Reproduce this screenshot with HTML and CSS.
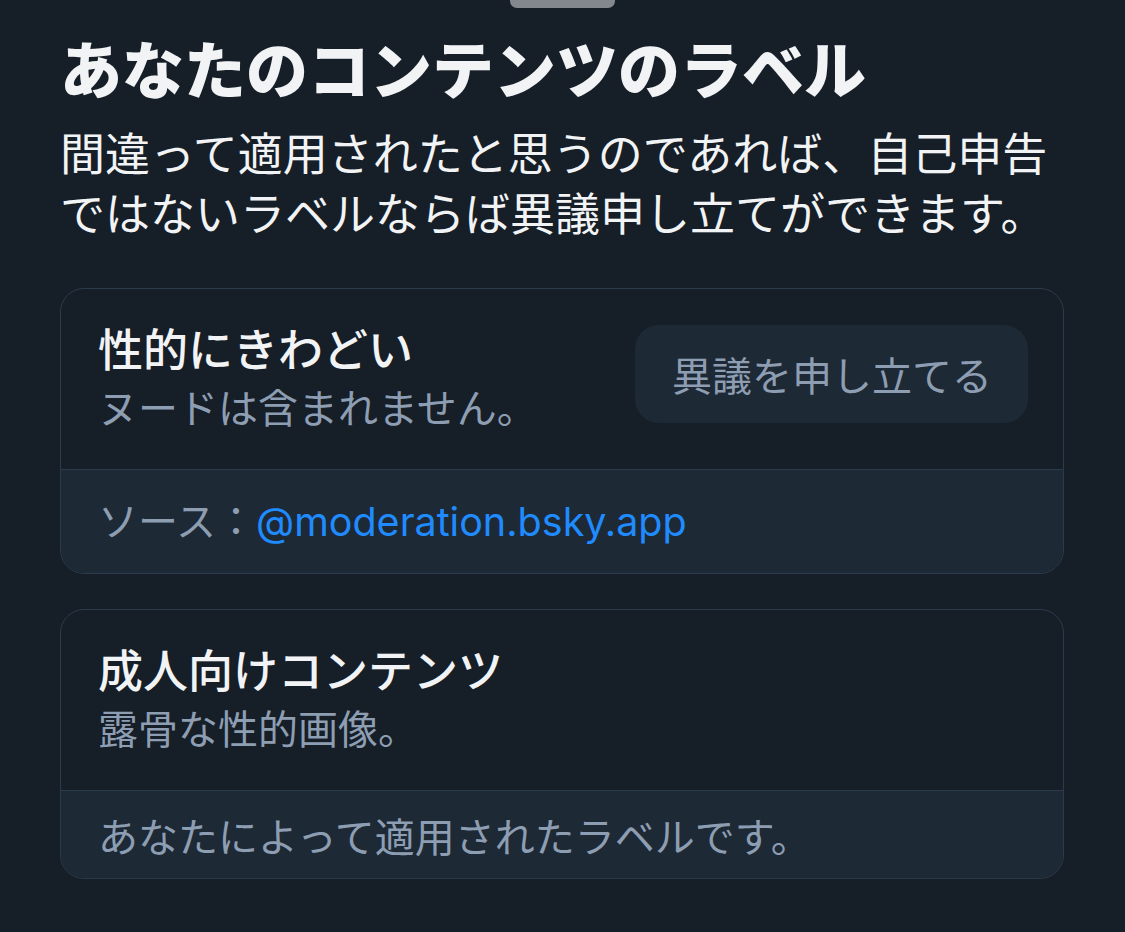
FILE: index.html
```html
<!DOCTYPE html>
<html lang="ja">
<head>
<meta charset="utf-8">
<link rel="stylesheet" href="styles.css">
</head>
<body>
<div class="sheet">
  <div class="handle"></div>
  <h1 class="title">あなたのコンテンツのラベル</h1>
  <p class="intro">間違って適用されたと思うのであれば、自己申告ではないラベルならば異議申し立てができます。</p>

  <div class="card">
    <div class="card-main">
      <div class="card-text">
        <div class="card-title">性的にきわどい</div>
        <div class="card-desc">ヌードは含まれません。</div>
      </div>
      <button class="appeal">異議を申し立てる</button>
    </div>
    <div class="card-foot card-foot-source">ソース：<span class="handle-link">@moderation.bsky.app</span></div>
  </div>

  <div class="card">
    <div class="card-main">
      <div class="card-text">
        <div class="card-title">成人向けコンテンツ</div>
        <div class="card-desc">露骨な性的画像。</div>
      </div>
    </div>
    <div class="card-foot">あなたによって適用されたラベルです。</div>
  </div>
</div>
</body>
</html>
```

FILE: styles.css
```css
html, body {
  margin: 0;
  padding: 0;
  background: #161e27;
  height: 100%;
  overflow: hidden;
}
body {
  font-family: "Noto Sans CJK JP", "Noto Sans", sans-serif;
  color: #f1f3f5;
}
.sheet {
  position: relative;
  padding: 28px 61px 0 60px;
  display: flex;
  flex-direction: column;
}
.handle {
  position: absolute;
  top: -8px;
  left: 510px;
  width: 105px;
  height: 16px;
  border-radius: 7px;
  background: #83878e;
}
.title {
  margin: 0 0 16px 0;
  font-size: 62px;
  font-weight: 900;
  line-height: 78px;
  letter-spacing: 0;
  color: #f1f3f5;
}
.intro {
  margin: 0 0 46px 0;
  font-size: 45px;
  line-height: 60px;
  font-weight: 400;
  color: #f1f3f5;
}
.card {
  border: 1px solid #2c3b4c;
  border-radius: 24px;
  overflow: hidden;
  margin-bottom: 35px;
}
.card-main {
  display: flex;
  justify-content: space-between;
  align-items: flex-start;
  padding: 32px 35px 32px 37px;
}
.card-text {
  display: flex;
  flex-direction: column;
}
.card-title {
  font-size: 45px;
  font-weight: 500;
  line-height: 54px;
  color: #f1f3f5;
}
.card-desc {
  font-size: 40px;
  line-height: 62px;
  color: #8d9db2;
}
.appeal {
  font-family: "Noto Sans CJK JP", sans-serif;
  font-size: 40px;
  line-height: 50px;
  color: #8d9db2;
  background: #1e2936;
  border: none;
  border-radius: 24px;
  padding: 24px 36px 24px 37px;
  margin: 4px 0 0 0;
  height: 98px;
}
.card-foot {
  background: #1e2936;
  border-top: 1px solid #2c3b4c;
  padding: 19px 37px 18px;
  font-size: 40px;
  line-height: 50px;
  color: #8d9db2;
}
.card-foot-source {
  padding: 24px 37px 26px;
}
.handle-link {
  font-family: Inter, "Noto Sans", sans-serif;
  font-size: 39.5px;
  color: #208bfe;
}
```
